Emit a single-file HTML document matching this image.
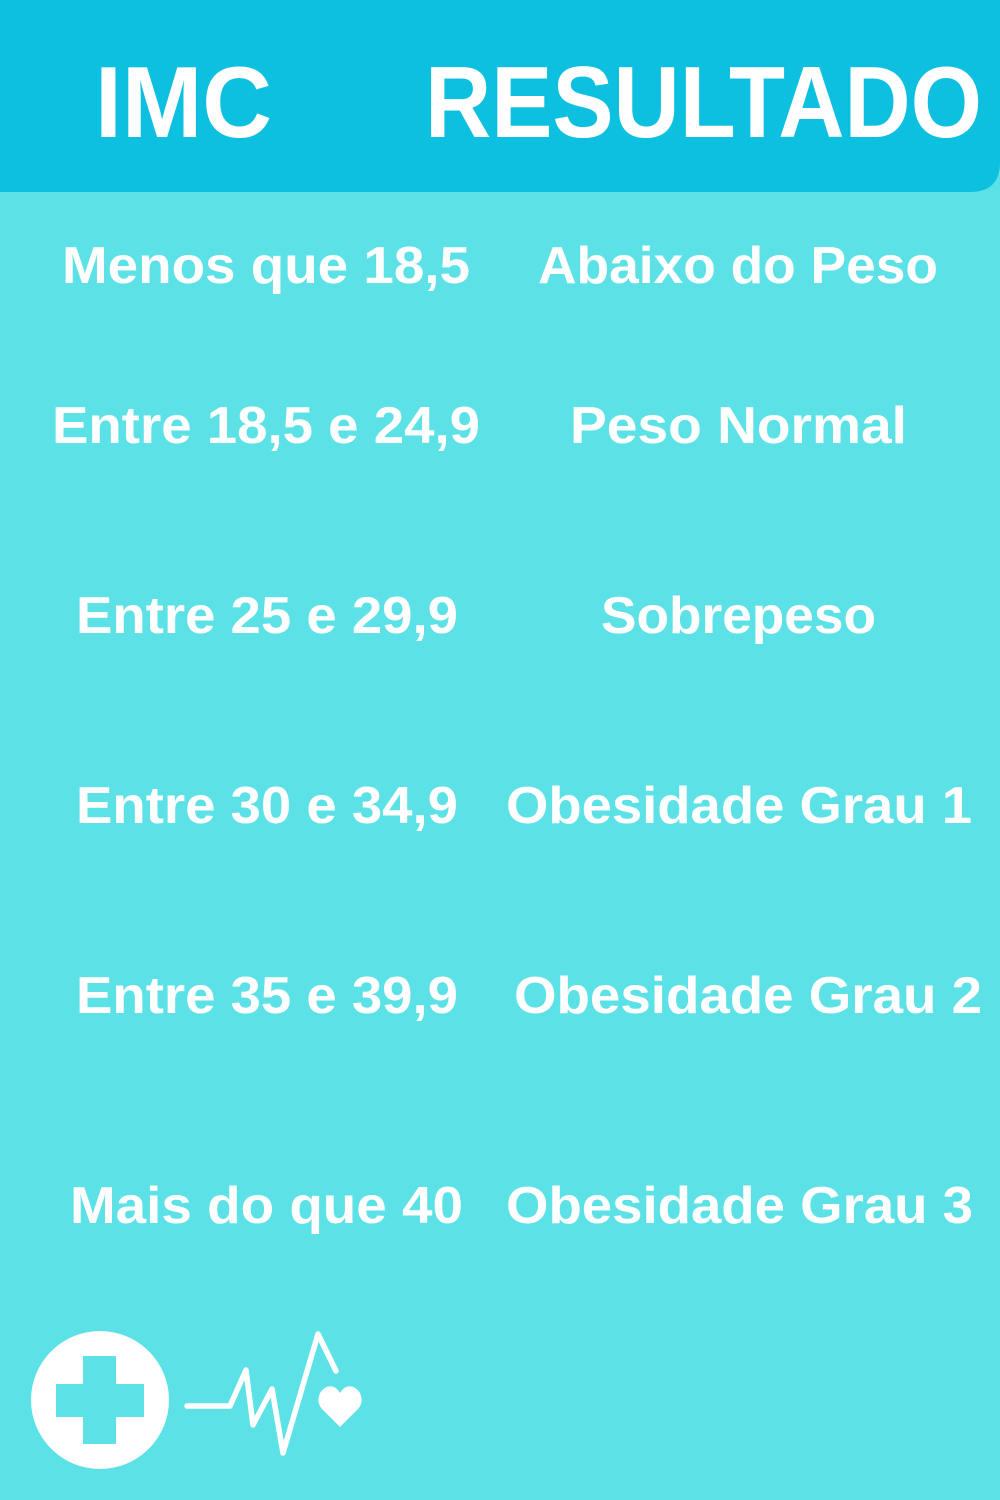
<!DOCTYPE html>
<html><head><meta charset="utf-8"><style>
html,body{margin:0;padding:0;background:#5ce1e6;}
svg{display:block}
text{font-family:"Liberation Sans",Arial,sans-serif;font-weight:bold;fill:#fff;}
</style></head><body>
<svg width="1000" height="1500" viewBox="0 0 1000 1500" xmlns="http://www.w3.org/2000/svg">
<rect width="1000" height="1500" fill="#5ce1e6"/>
<path d="M0 0H1000V162Q1000 192 970 192H0Z" fill="#0ec0df"/>
<text x="95" y="137" font-size="101" textLength="177" lengthAdjust="spacingAndGlyphs">IMC</text>
<text x="425" y="137" font-size="101" textLength="557" lengthAdjust="spacingAndGlyphs">RESULTADO</text>
<g font-size="52">
<text x="62" y="283" textLength="408" lengthAdjust="spacingAndGlyphs">Menos que 18,5</text>
<text x="538" y="283" textLength="400" lengthAdjust="spacingAndGlyphs">Abaixo do Peso</text>
<text x="52" y="443" textLength="428" lengthAdjust="spacingAndGlyphs">Entre 18,5 e 24,9</text>
<text x="570" y="443" textLength="337" lengthAdjust="spacingAndGlyphs">Peso Normal</text>
<text x="76" y="633" textLength="382" lengthAdjust="spacingAndGlyphs">Entre 25 e 29,9</text>
<text x="601" y="633" textLength="275" lengthAdjust="spacingAndGlyphs">Sobrepeso</text>
<text x="76" y="823" textLength="382" lengthAdjust="spacingAndGlyphs">Entre 30 e 34,9</text>
<text x="506" y="823" textLength="466" lengthAdjust="spacingAndGlyphs">Obesidade Grau 1</text>
<text x="76" y="1013" textLength="382" lengthAdjust="spacingAndGlyphs">Entre 35 e 39,9</text>
<text x="514" y="1013" textLength="468" lengthAdjust="spacingAndGlyphs">Obesidade Grau 2</text>
<text x="70" y="1223" textLength="393" lengthAdjust="spacingAndGlyphs">Mais do que 40</text>
<text x="506" y="1223" textLength="467" lengthAdjust="spacingAndGlyphs">Obesidade Grau 3</text>
</g>
<circle cx="100" cy="1400" r="69" fill="#fff"/>
<rect x="83" y="1356" width="33" height="88" fill="#5ce1e6"/>
<rect x="56" y="1384" width="88" height="33" fill="#5ce1e6"/>
<polyline points="187,1406 230,1406 246,1370 253,1425 272,1389 283,1453 318,1334 336,1371" fill="none" stroke="#fff" stroke-width="5.5" stroke-linecap="round" stroke-linejoin="round"/>
<path d="M340 1427 L322 1409 Q316 1402 320 1393 Q326 1384 334 1387 Q338 1389 340 1393 Q342 1389 346 1387 Q354 1384 360 1393 Q364 1402 358 1409 Z" fill="#fff"/>
</svg>
</body></html>
